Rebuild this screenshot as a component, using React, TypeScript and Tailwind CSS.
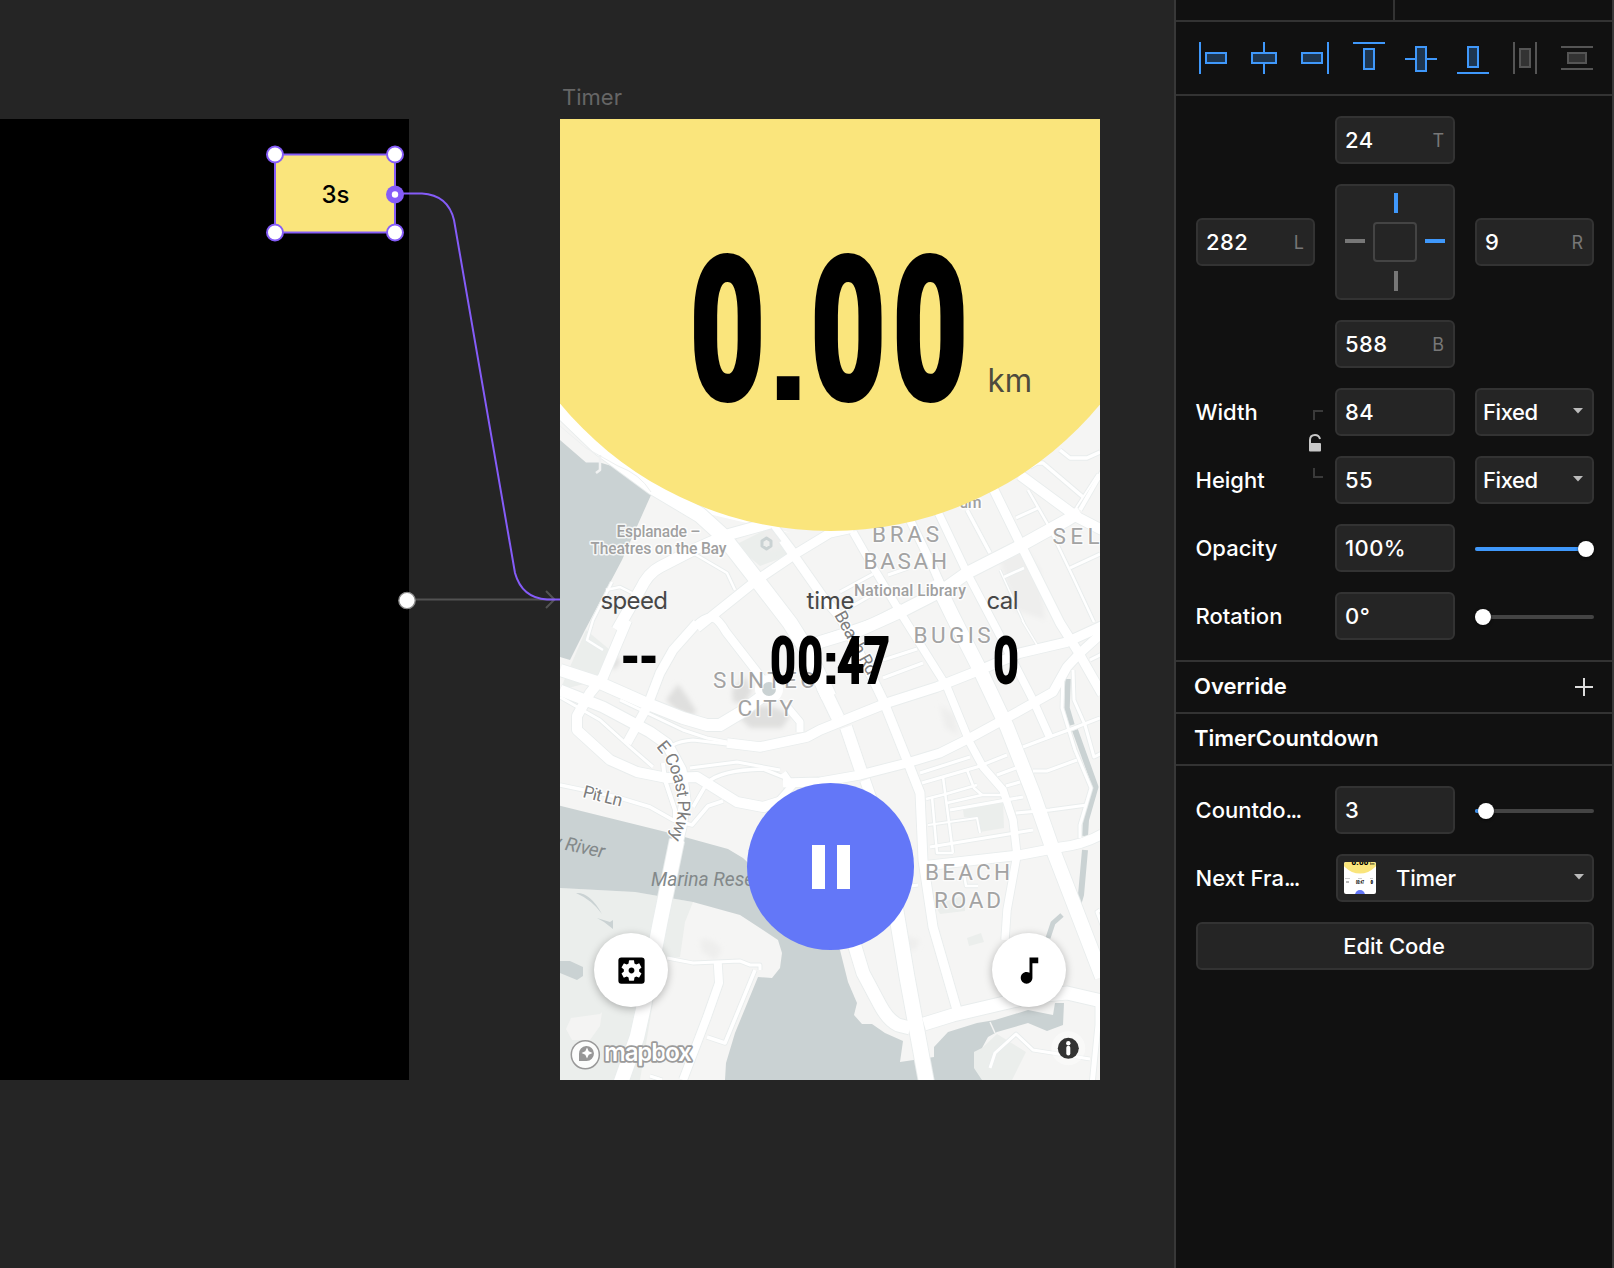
import React from "react";
import { MdMusicNote, MdSettingsApplications } from "react-icons/md";

const WATER = [
  "M560 440L586 462.5H600L618 468L638 482L651 495L622 560L585 630L570 660L560 657Z",
  "M560 805.7L670 833L728 849L743 858L840 950L848 982L857 1003L854 1015L862 1024H872L885 1033L903 1041L900 1062L934 1057V1047L948 1032L977 1023L995 1020L1028 1010L1053 1015L1055 1003H1064L1063 1025L1047 1031L1028 1023L997 1032L988 1037L982 1048L974 1052V1068L982 1080H725L726 1063L735 1033L758 977L772 978L780 968L782 953L778 940L763 930L740 915L693 902L635 892L560 888Z",
];

const PARKS = [
  "M560 888L635 892L693 902L685 922L680 957L660 960L640 1080H560Z",
  "M963 810L1003 800L1004 828L980 832L977 818L964 817Z",
  "M974 1052L982 1048L997 1034L1026 1052L1012 1080H982L974 1068Z",
  "M735 545L775 525L795 553L760 566Z",
  "M586 630L560 690L600 680L610 650Z",
  "M935 905L965 895V911L940 914Z",
  "M967 938L981 933L984 942L969 946Z",
];

const POND = [
  "M576 893Q590 892 602 914Q592 900 576 893Z",
  "M597 918L610 922L613 920V929L604 922Z",
  "M560 961L570 961L583 967V976L577 980L560 973Z",
];

const SHADE = [
  "M666 700L678 684L686 695L697 712L690 716L676 710Z",
  "M738 716Q765 696 790 716L782 728H750Z",
  "M732 690L745 676L752 690L745 704L733 702Z",
  "M609 662L618 656L620 664L613 670Z",
];

const FAINT_SHADE = [
  "M700 940Q712 936 722 950L715 960L702 952Z",
  "M762 528L775 522L785 545L768 552Z",
  "M1000 560L1020 540L1040 570L1045 620L1015 610Z",
  "M940 705L955 715L958 735L945 728Z",
  "M900 935L920 940L915 950L895 948Z",
];

const CANALS: [string, number][] = [
  ["M1068 679L1067 708L1072 725", 5.5],
  ["M1075 730L1095.500 787L1086 820L1085 836", 6],
  ["M1085 850L1081 895L1078 905", 6],
  ["M1062 915L1053 923L1048 938", 5],
];

const ROADS: [string, number][] = [
  ["M606 590L620 587L634 594", 2.5],
  ["M693 553L727 573L735 590", 2.5],
  ["M603 650L587 640L593 620L612 582", 2.5],
  ["M560 697L600 720L630 747L653 767", 3],
  ["M620 700L683 730L707 738L727 742", 3],
  ["M673 745Q680 741 693 740L727 744", 3],
  ["M690 768L737 762L780 770", 3],
  ["M693 807L707 783Q720 770 763 769L783 777", 3.5],
  ["M663 763L665 780L675 810V822", 4],
  ["M560 785L617 797L650 807L673 820L692 825L708 806L723 801", 3.5],
  ["M783 773L792 786L777 803L763 809", 7],
  ["M1060 450L1070 458H1087L1100 452", 3.5],
  ["M1030 467L1037 463H1043L1083 497", 3.5],
  ["M1080 510L1103 470", 4],
  ["M1076 508L1098 474", 2],
  ["M1016 518L1038 508", 3],
  ["M1028 490L1047 523L1073 577L1094 622", 2.5],
  ["M967 510L990 553", 3.5],
  ["M1000 570L1024 623", 1.500],
  ["M1004 577L1024 568", 2.5],
  ["M1070 568L1100 554", 3],
  ["M840 592L873 574", 3],
  ["M842 612L875 593", 3],
  ["M888 575L908 568", 3],
  ["M883 660L917 649", 3],
  ["M883 678L923 663", 3],
  ["M1022 620L1040 650", 1.500],
  ["M920 773L970 757", 3],
  ["M922 783L977 767L1007 755", 3],
  ["M943 777L953 853", 2.5],
  ["M932 797L937 853H953", 2.5],
  ["M926 799L946 794L977 785", 2.5],
  ["M947 803L982 795L1003 795", 2.5],
  ["M967 770L974 788L982 795", 2.5],
  ["M950 810L1023 797", 3],
  ["M928 825L977 818L980 833", 2],
  ["M930 847L1033 830", 3],
  ["M997 775L1016 768", 3],
  ["M1006 786L1020 782", 3],
  ["M1023 747L1052 736L1074 728L1100 718", 3],
  ["M1033 771L1047 771L1077 760", 3],
  ["M1016 813L1050 810L1087 805", 3],
  ["M1063 673L1062 708L1075 750L1091 788L1080 825V838", 3],
  ["M1073 670L1074 700L1085 725L1094 757L1102 753", 3],
  ["M1090 660L1102 654", 3],
  ["M667 958L693 963L740 961L750 965H760V970", 3],
  ["M755 970L725 1043L707 1037", 3.5],
  ["M990 1068L995 1053L1016 1034L1033 1050L1090 1059", 3],
  ["M650 1076L662 1080", 3],
  ["M964 874L966 886H978", 2.5],
  ["M1100 910L1097 912L1102 925", 3],
  ["M905 887L918 885", 3],
  ["M717.700 962L719 983L707 1017L683 1080", 8],
  ["M560 690L603 707L650 732L667 744L681 770L685 800L681 827L673 860", 11],
  ["M696 626Q705 616 714 618Q719 620 726 632L757 672L766 684", 8],
  ["M785 704L800 722V732", 7],
  ["M697 623L673 650L660 673L647 707L627 743", 9],
  ["M697 628L757 580L797 553L830 533L853 528", 9],
  ["M617 630L640 590Q648 573 660 567L693 550L727 535L770 523", 11],
  ["M627 620L603 677L590 693L577 716V730L610 760L637 772L667 778L697 777L737 802L763 807L785 800", 10],
  ["M783 540L823 597L840 617L870 673L883 700L907 760L920 793L923 860L933 927L957 1010", 9],
  ["M772 523L797 556", 7],
  ["M853 532L873 567L900 612L947 687L970 743L983 767L1003 790L1013 820L1017 855L1007 910L1005 940", 7.5],
  ["M910 520L933 567L958 625", 8],
  ["M937 510L967 573L997 630L1033 700L1050 738", 7.5],
  ["M993 488L1020 543L1060 623L1077 650L1102 694", 9],
  ["M1020 475L1077 517L1102 530", 10],
  ["M800 652L820 642L860 630L900 612L943 590L967 573L1020 546L1067 520L1080 512", 12],
  ["M820 640L873 622L902 607", 7],
  ["M727 743L760 747L807 737L820 730L887 703L937 687L980 670L1020 653L1067 642L1102 626", 9.500],
  ["M783 783L820 782L860 775L907 763L940 753L970 738L1003 720L1053 692L1067 667L1080 653L1102 633", 9],
  ["M560 670L600 683L643 702L683 718L707 725H720L740 713L768 692", 12],
  ["M554 404L600 448L653 487L700 515L722 535L757 580L790 623L807 650L829 697", 15],
  ["M935 580L953 617L980 670L1007 727L1033 793L1053 850L1102 977", 14],
  ["M823 687L838 718", 13],
  ["M846 727L862 774", 12],
  ["M865 780L872 800", 10],
  ["M923 866L1020 855L1062 847Q1085 844 1102 834", 9.500],
  ["M853 940L863 973L880 1005Q888 1020 898 1025L910 1028", 13],
  ["M895 905L907 977L927 1085", 15],
  ["M924 1024L953 1015L1000 1004L1035 996L1067 993L1102 1001", 13],
  ["M1098 1003V1025L1092 1085", 5],
  ["M677 840L660 923L643 1010L637 1037L620 1085", 14.500],
];

function MapArt() {
  return (
    <svg className="absolute inset-0 h-full w-full" viewBox="560 119 540 961" fontFamily="Roboto, sans-serif">
      <defs>
        <path id="coast" d="M656 747Q668 759 674.500 783Q680 804 676 822L668 842" />
        <filter id="soft"><feGaussianBlur stdDeviation="2.500" /></filter>
      </defs>
      <rect x="560" y="119" width="540" height="961" fill="#f5f5f4" />
      <path d="M560 402L600 452L650 487L700 512L790 533L700 500Z" fill="#fff" />
      {PARKS.map((d) => <path key={d} d={d} fill="#ebeeec" />)}
      <path d="M571 1018L600 1014L602 1012L600 1026L590 1040L572 1040L566 1029Z" fill="#f4f4f3" />
      <g filter="url(#soft)" fill="#dfdfde">{SHADE.map((d) => <path key={d} d={d} />)}</g>
      <g filter="url(#soft)" fill="#eeeeed">{FAINT_SHADE.map((d) => <path key={d} d={d} />)}</g>
      {WATER.map((d) => <path key={d} d={d} fill="#cad2d3" />)}
      {POND.map((d) => <path key={d} d={d} fill="#cad2d3" />)}
      <g fill="none" strokeLinejoin="round">
        {CANALS.map(([d, w]) => <path key={d} d={d} stroke="#cad2d3" strokeWidth={w} />)}
        {ROADS.map(([d, w]) => <path key={d} d={d} stroke="#e9eded" strokeWidth={w + 1.800} />)}
        {ROADS.map(([d, w]) => <path key={d} d={d} stroke="#fff" strokeWidth={w} />)}
        <path d="M600 455V470L596 473" stroke="#f1f2f2" strokeWidth="2.500" />
        <path d="M560 426L586 448L618 466Q640 474 651 492" stroke="#eef0f0" strokeWidth="1" />
        <path d="M766.500 538L771 541V546L766.500 549L762 546V541Z" stroke="#cad2d3" strokeWidth="3" />
        <circle cx="769" cy="689" r="14" fill="#fff" />
        <circle cx="769" cy="689" r="7" fill="#cad2d3" />
        <path d="M990 1022L995 1033" stroke="#f4f4f3" strokeWidth="1.500" />
      </g>
      <g fill="#a0a0a0" stroke="#fff" strokeOpacity=".8" strokeWidth="3" strokeLinejoin="round" paintOrder="stroke" fontSize="15.800" fontWeight="500" lengthAdjust="spacingAndGlyphs">
        <text x="616.500" y="537" textLength="84">Esplanade –</text>
        <text x="590.500" y="554" textLength="136">Theatres on the Bay</text>
        <text x="854" y="596" textLength="112">National Library</text>
        <text x="959.500" y="507.500" textLength="22">um</text>
      </g>
      <g fill="#a3a3a3" stroke="#fff" strokeOpacity=".7" strokeWidth="2.500" strokeLinejoin="round" paintOrder="stroke" fontSize="22.500" fontWeight="400">
        <text x="872" y="541.500" textLength="67">BRAS</text>
        <text x="863.500" y="569" textLength="83.500">BASAH</text>
        <text x="1052.500" y="543.500" textLength="47">SEL</text>
        <text x="913.500" y="643" textLength="77">BUGIS</text>
        <text x="713" y="688" textLength="102">SUNTEC</text>
        <text x="737.500" y="716" textLength="55.500">CITY</text>
        <text x="925" y="880" textLength="85">BEACH</text>
        <text x="934" y="907.500" textLength="67">ROAD</text>
      </g>
      <g fill="#7d7d7d" stroke="#fff" strokeWidth="2.500" strokeLinejoin="round" paintOrder="stroke" fontSize="17.500">
        <text transform="translate(582 797) rotate(14)" textLength="40">Pit Ln</text>
        <text textLength="98"><textPath href="#coast">E Coast Pkwy</textPath></text>
        <text transform="translate(834 615) rotate(61)" textLength="70">Beach Rd</text>
      </g>
      <g fill="#83898a" fontSize="19" fontStyle="italic" fontWeight="400">
        <text transform="translate(551.500 847) rotate(12)" textLength="53">y River</text>
        <text x="651" y="885.500" fontSize="20.500" textLength="140" lengthAdjust="spacingAndGlyphs">Marina Reservoir</text>
      </g>
      <g>
        <circle cx="585.300" cy="1054.700" r="14" fill="#fff" fillOpacity=".85" stroke="#999" strokeWidth="1.500" />
        <path d="M579 1061V1054A7.500 7.500 0 1 1 586.500 1061Z" fill="#979797" />
        <path d="M586.500 1048.500L588.200 1052.300L592 1054L588.200 1055.700L586.500 1059.500L584.800 1055.700L581 1054L584.800 1052.300Z" fill="#fff" transform="translate(0.500 -1)" />
        <text x="604" y="1061" fontFamily="Inter, sans-serif" fontWeight="600" fontSize="24.500" textLength="88" fill="#fff" stroke="#9b9b9b" strokeWidth="3.500" paintOrder="stroke" strokeLinejoin="round">mapbox</text>
      </g>
      <circle cx="1068.300" cy="1048.300" r="17" fill="#fff" fillOpacity=".4" />
      <circle cx="1068.300" cy="1048.300" r="10.500" fill="#333" />
      <circle cx="1068.300" cy="1043.300" r="2.200" fill="#fff" />
      <path d="M1068.300 1047.700V1053.500" stroke="#fff" strokeWidth="4" strokeLinecap="round" />
    </svg>
  );
}

function Readouts() {
  return (
    <svg className="absolute inset-0 h-full w-full" viewBox="560 119 540 961">
      <g className="font-[Roboto] font-light font-stretch-75%" fontSize="177.500" stroke="#000" strokeWidth="20">
        <text transform="translate(693.700 390.700) scale(.78 1)" x="0">0</text>
        <text transform="translate(814.400 390.700) scale(.78 1)" x="0 105.200">00</text>
      </g>
      <text className="font-['Liberation_Sans'] font-bold" fontSize="160" transform="translate(766 400)">.</text>
      <g className="font-[Roboto] font-light font-stretch-75%" fontSize="59.500" stroke="#000" strokeWidth="6">
        <text transform="translate(771.200 680.900) scale(.81 1)" x="0 33.700">00</text>
        <text transform="translate(838.500 680.900) scale(.82 1)" x="0 32">47</text>
        <text transform="translate(994.200 680.900) scale(.81 1)">0</text>
      </g>
      <text className="font-[Roboto] font-black font-stretch-75%" transform="translate(619 677) scale(.95 1)" fontSize="57" x="0 19.200">--</text>
      <text className="font-['Liberation_Sans'] font-bold" fontSize="62" transform="translate(820.500 684)">:</text>
      <g className="font-[Inter]" fill="#474747">
        <text x="987.500" y="391.500" fontSize="32.500" fontWeight="400" fill="#4d4a3d" textLength="44.500" lengthAdjust="spacingAndGlyphs">km</text>
        <g fontSize="24" lengthAdjust="spacingAndGlyphs">
          <text x="600.500" y="609" textLength="67.500">speed</text>
          <text x="806.500" y="609" textLength="48">time</text>
          <text x="986.500" y="609" textLength="32">cal</text>
        </g>
      </g>
    </svg>
  );
}

function Artboards() {
  return (
    <main className="relative min-w-0 flex-1 overflow-hidden bg-[#252525]">
      <div className="absolute top-[119px] left-0 h-[961px] w-[409px] bg-black" />
      <span className="absolute top-[83px] left-[562px] text-[22px] leading-7 text-[#666]">Timer</span>
      <section className="absolute top-[119px] left-[560px] h-[961px] w-[540px] overflow-hidden bg-white">
        <MapArt />
        <div className="absolute -top-[289px] -left-[80.500px] size-[701px] rounded-full bg-[#fae57c]" />
        <Readouts />
        <button className="absolute top-[664px] left-[187.400px] flex size-[167px] items-center justify-center gap-3 rounded-full bg-[#6377f8]">
          <span className="h-11 w-[13px] bg-white" />
          <span className="h-11 w-[13px] bg-white" />
        </button>
        <button className="absolute top-[814px] left-[34.400px] flex size-[74px] items-center justify-center rounded-full bg-white shadow-[0_2px_8px_rgba(0,0,0,0.28)]">
          <MdSettingsApplications className="ml-px size-[35px] text-black" />
        </button>
        <button className="absolute top-[814px] left-[431.500px] flex size-[74px] items-center justify-center rounded-full bg-white pl-px shadow-[0_2px_8px_rgba(0,0,0,0.28)]">
          <MdMusicNote className="size-[35px] text-black" />
        </button>
      </section>
      <div className="absolute top-[154px] left-[275px] flex h-[79px] w-[120px] items-center justify-center bg-[#fae57c] pt-0.5 pl-px text-2xl font-medium text-black">3s</div>
      <svg className="absolute inset-0 h-[1268px] w-[560px]" viewBox="0 0 560 1268" fill="none">
        <path d="M407 599.500H553M546 591L554.500 599.500L546 608" stroke="#525252" strokeWidth="2" />
        <path d="M395 193.500H422Q448 195 454 220L515 573Q522 598 547 599.500H560" stroke="#855cf8" strokeWidth="2" />
        <rect x="275" y="154.500" width="120" height="78" stroke="#855cf8" strokeWidth="2" />
        <g fill="#fff" stroke="#855cf8" strokeWidth="2">
          <circle cx="275" cy="154.500" r="8" />
          <circle cx="395" cy="154.500" r="8" />
          <circle cx="275" cy="232.500" r="8" />
          <circle cx="395" cy="232.500" r="8" />
        </g>
        <circle cx="395" cy="194.500" r="9" fill="#855cf8" />
        <circle cx="395" cy="194.500" r="3.200" fill="#fff" />
        <circle cx="407" cy="600.500" r="8.200" fill="#fff" stroke="#8a8a8a" strokeWidth="1.300" />
      </svg>
    </main>
  );
}

const ALIGN: { line: string; box: [number, number, number, number]; dim?: boolean }[] = [
  { line: "M3 0V32", box: [9, 11, 20, 10] },
  { line: "M15 0V32", box: [3, 11, 24, 10] },
  { line: "M27 0V32", box: [1, 11, 20, 10] },
  { line: "M0 1H32", box: [11, 7, 10, 20] },
  { line: "M0 17H32", box: [11, 5, 10, 24] },
  { line: "M0 31H32", box: [11, 5, 10, 20] },
  { line: "M5 0V32M27 0V32", box: [11, 7, 10, 18], dim: true },
  { line: "M0 5H32M0 27H32", box: [7, 11, 18, 10], dim: true },
];

function AlignIcon({ line, box, dim }: (typeof ALIGN)[number]) {
  return (
    <svg width="32" height="32" stroke={dim ? "#555" : "#3f98fb"} strokeWidth="2">
      <path d={line} />
      <rect x={box[0]} y={box[1]} width={box[2]} height={box[3]} fill="#111" stroke="none" />
      <rect x={box[0]} y={box[1]} width={box[2]} height={box[3]} fill={dim ? "#333" : "#1e3650"} />
    </svg>
  );
}

function Field({ value, unit }: { value: string; unit?: string }) {
  return (
    <div className="flex h-12 items-center justify-between rounded-md border-2 border-[#333] bg-[#252525] pr-[9px] pl-2">
      <span className="tracking-[0.02em]">{value}</span>
      {unit && <span className="pt-0.5 text-[18px] font-normal text-[#777]">{unit}</span>}
    </div>
  );
}

function Caret() {
  return (
    <svg width="10" height="6" className="-translate-y-px"><path d="M0 0H10L5 5.500Z" fill="#bbb" /></svg>
  );
}

function Select({ value }: { value: string }) {
  return (
    <div className="flex h-12 items-center justify-between rounded-md border-2 border-[#333] bg-[#252525] pr-[9px] pl-1.5">
      <span className="tracking-[-0.02em]">{value}</span>
      <Caret />
    </div>
  );
}

function Slider({ fill, children }: { fill?: string; children: React.ReactNode }) {
  return (
    <div className="relative flex h-12 translate-y-px items-center">
      <span className="h-1 w-full overflow-hidden rounded-sm bg-[#444]">
        <span className={`block h-full bg-[#3f98fb] ${fill ?? "w-0"}`} />
      </span>
      {children}
    </div>
  );
}

const KNOB = "absolute size-4 rounded-full bg-white shadow-[0_1px_3px_rgba(0,0,0,0.6)]";
const GRID = "grid grid-cols-[119px_120px_119px] gap-5 px-5";

function Label({ children, clipped }: { children: string; clipped?: boolean }) {
  return (
    <span className="-ml-[0.5px] self-center whitespace-nowrap">
      {children}
      {clipped && <span className="tracking-[-0.08em]">...</span>}
    </span>
  );
}

function Thumb() {
  return (
    <svg width="32" height="32" className="rounded-xs" viewBox="0 0 32 32">
      <rect width="32" height="32" fill="#fff" />
      <circle cx="16" cy="-9.500" r="21" fill="#fae57c" />
      <text x="16" y="3" textAnchor="middle" fontSize="8" className="font-[Roboto] font-black" textLength="17">0.00</text>
      <text x="26" y="2.500" fontSize="3" className="font-[Inter]">km</text>
      <path d="M1 16.500H6M14 16.500H18M26 16.500H29" stroke="#ccc" />
      <path d="M2 20H5" stroke="#777" />
      <text x="12" y="22" fontSize="5" textLength="8" className="font-[Roboto] font-black" lengthAdjust="spacingAndGlyphs">00:47</text>
      <text x="26.500" y="22" fontSize="5" className="font-[Roboto] font-black font-stretch-75%">0</text>
      <circle cx="16" cy="33" r="5" fill="#6377f8" />
    </svg>
  );
}

function Inspector() {
  return (
    <aside className="flex w-[440px] shrink-0 flex-col border-x-2 border-[#383838] bg-[#111] font-medium">
      <div className="flex h-[22px] border-b-2 border-[#333]">
        <div className="w-[219px] border-r-2 border-[#333]" />
      </div>
      <div className="flex h-[74px] items-start gap-5 border-b-2 border-[#333] pt-5 pl-[21px]">
        {ALIGN.map((a) => <AlignIcon key={a.line} {...a} />)}
      </div>
      <div className={`${GRID} h-[566px] content-start border-b-2 border-[#333] pt-5`}>
        <div className="col-start-2"><Field value="24" unit="T" /></div>
        <div className="col-start-1 self-center"><Field value="282" unit="L" /></div>
        <div className="flex h-[116px] flex-col items-center justify-between rounded-md border-2 border-[#333] bg-[#252525] py-[7px]">
          <span className="ml-0.5 h-5 w-1 bg-[#3f98fb]" />
          <div className="flex w-full items-center justify-between px-2">
            <span className="-mt-0.5 h-1 w-5 bg-[#777]" />
            <span className="h-10 w-11 rounded-sm border-2 border-[#444]" />
            <span className="-mt-0.5 h-1 w-5 bg-[#3f98fb]" />
          </div>
          <span className="ml-0.5 h-5 w-1 bg-[#777]" />
        </div>
        <div className="self-center"><Field value="9" unit="R" /></div>
        <div className="col-start-2"><Field value="588" unit="B" /></div>
        <div className="relative col-start-1 flex items-center">
          <Label>Width</Label>
          <svg className="absolute top-[22px] left-[112px]" width="16" height="70" fill="none">
            <path d="M6 10V1H15M6 58V67H15" stroke="#3a3a3a" strokeWidth="2" />
            <path d="M2 37V30Q2 25 7 25Q11 25 12 29" stroke="#c8c8c8" strokeWidth="2" />
            <rect x="1" y="33" width="12" height="8.500" rx="1" fill="#c8c8c8" />
          </svg>
        </div>
        <Field value="84" />
        <Select value="Fixed" />
        <Label>Height</Label>
        <Field value="55" />
        <Select value="Fixed" />
        <Label>Opacity</Label>
        <Field value="100%" />
        <Slider fill="w-[110px]"><span className={`${KNOB} right-0`} /></Slider>
        <Label>Rotation</Label>
        <Field value="0°" />
        <Slider><span className={`${KNOB} left-0`} /></Slider>
      </div>
      <div className="flex h-[52px] items-center justify-between border-b-2 border-[#333] px-[18px] font-semibold">
        <span className="pb-0.5">Override</span>
        <svg width="20" height="20" className="-translate-y-px"><path d="M1 11H19M10 2V20" stroke="#ddd" strokeWidth="2" /></svg>
      </div>
      <div className="flex h-[52px] items-center border-b-2 border-[#333] pb-0.5 pl-[18px] font-semibold">TimerCountdown</div>
      <div className={`${GRID} pt-5`}>
        <Label clipped>Countdo</Label>
        <Field value="3" />
        <Slider fill="w-[10px]"><span className={`${KNOB} left-[3px]`} /></Slider>
        <Label clipped>Next Fra</Label>
        <div className="col-span-2 ml-px flex h-12 items-center rounded-md border-2 border-[#333] bg-[#252525] pr-2 pl-1.5">
          <Thumb />
          <span className="flex-1 pl-5 tracking-[-0.01em]">Timer</span>
          <Caret />
        </div>
        <button className="col-span-3 h-12 rounded-md border-2 border-[#333] bg-[#252525] pr-0.5">Edit Code</button>
      </div>
    </aside>
  );
}

export default function App() {
  return (
    <div className="flex h-[1268px] w-[1614px] overflow-hidden bg-[#252525] font-[Inter] text-[22px] leading-7 text-white">
      <Artboards />
      <Inspector />
    </div>
  );
}
